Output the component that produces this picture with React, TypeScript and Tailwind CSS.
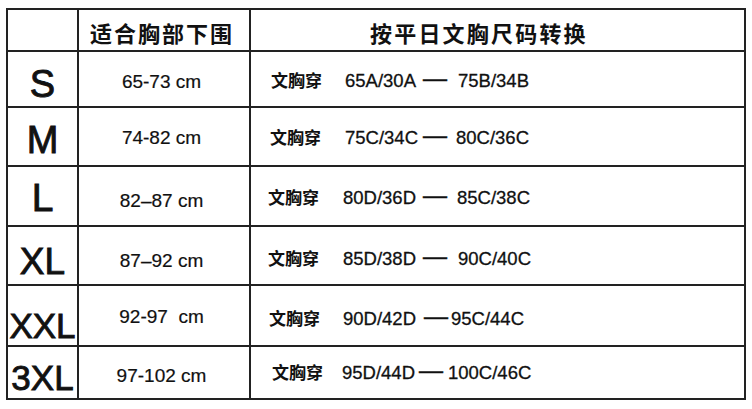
import React from "react";

type Row = {
  size: string;
  sizeCls: string;
  range: string;
  rangeCls: string;
  h: string;
  c3: string;
  w1: string;
  w2: string;
  w3: string;
  dash: string;
  a: string;
  b: string;
};

const rows: Row[] = [
  {
    size: "S",
    sizeCls: "text-[38px] pt-[9px]",
    range: "65-73 cm",
    rangeCls: "pt-[5px]",
    h: "h-[54px]",
    c3: "pl-[20px] pt-[5px]",
    w1: "w-[74px]",
    w2: "w-[78px]",
    w3: "w-[35px]",
    dash: "w-[24px]",
    a: "65A/30A",
    b: "75B/34B",
  },
  {
    size: "M",
    sizeCls: "text-[38px] pt-[7px]",
    range: "74-82 cm",
    rangeCls: "pt-[2px]",
    h: "h-[57px]",
    c3: "pl-[19px] pt-[3px]",
    w1: "w-[75px]",
    w2: "w-[78px]",
    w3: "w-[33px]",
    dash: "w-[24px]",
    a: "75C/34C",
    b: "80C/36C",
  },
  {
    size: "L",
    sizeCls: "text-[39px] pt-[3px]",
    range: "82\u201387 cm",
    rangeCls: "pt-[8px]",
    h: "h-[58px]",
    c3: "pl-[17px] pt-[4px]",
    w1: "w-[75px]",
    w2: "w-[80px]",
    w3: "w-[34px]",
    dash: "w-[24px]",
    a: "80D/36D",
    b: "85C/38C",
  },
  {
    size: "XL",
    sizeCls: "text-[37px] pt-[11px]",
    range: "87\u201392 cm",
    rangeCls: "pt-[9px]",
    h: "h-[57px]",
    c3: "pl-[17px] pt-[7px]",
    w1: "w-[75px]",
    w2: "w-[80px]",
    w3: "w-[35px]",
    dash: "w-[24px]",
    a: "85D/38D",
    b: "90C/40C",
  },
  {
    size: "XXL",
    sizeCls: "text-[35px] pt-[19px]",
    range: "92-97\u00a0 cm",
    rangeCls: "pt-[2px]",
    h: "h-[59px]",
    c3: "pl-[18px] pt-[7px]",
    w1: "w-[74px]",
    w2: "w-[81px]",
    w3: "w-[27px]",
    dash: "w-[24px]",
    a: "90D/42D",
    b: "95C/44C",
  },
  {
    size: "3XL",
    sizeCls: "text-[35px] pt-[10px]",
    range: "97-102 cm",
    rangeCls: "pt-[5px]",
    h: "h-[51px]",
    c3: "pl-[21px] pt-[1px]",
    w1: "w-[70px]",
    w2: "w-[77px]",
    w3: "w-[29px]",
    dash: "w-[26px]",
    a: "95D/44D",
    b: "100C/46C",
  },
];

export default function App() {
  return (
    <div className="w-[752px] h-[409px] bg-white pl-[6px] pt-[8px] text-[#111] font-['Liberation_Sans','Noto_Sans_CJK_SC',sans-serif]">
      <div className="w-[740px] bg-[#222] p-[2px] flex flex-col gap-[2px]">
        {/* header */}
        <div className="grid grid-cols-[69px_170px_493px] gap-[2px] h-[40px]">
          <div className="bg-white" />
          <div className="bg-white flex items-center pl-[11px] pt-[3px]">
            <span className="font-['Noto_Sans_CJK_SC',sans-serif] font-bold text-[22px] tracking-[2px] leading-none">
              适合胸部下围
            </span>
          </div>
          <div className="bg-white flex items-center pl-[119px] pt-[3px]">
            <span className="font-['Noto_Sans_CJK_SC',sans-serif] font-bold text-[22px] tracking-[2.2px] leading-none">
              按平日文胸尺码转换
            </span>
          </div>
        </div>
        {rows.map((r) => (
          <div
            key={r.size}
            className={`grid grid-cols-[69px_170px_493px] gap-[2px] ${r.h}`}
          >
            <div
              className={`bg-white flex items-center justify-center leading-none [-webkit-text-stroke:0.9px_#111] ${r.sizeCls}`}
            >
              {r.size}
            </div>
            <div
              className={`bg-white flex items-center justify-center pr-[5px] text-[19px] leading-none whitespace-pre [-webkit-text-stroke:0.2px_#111] ${r.rangeCls}`}
            >
              {r.range}
            </div>
            <div className={`bg-white flex items-center leading-none ${r.c3}`}>
              <span
                className={`${r.w1} shrink-0 mb-[4px] font-['Noto_Sans_CJK_SC',sans-serif] font-bold text-[17px]`}
              >
                文胸穿
              </span>
              <span
                className={`${r.w2} shrink-0 text-[18.5px] [-webkit-text-stroke:0.3px_#111]`}
              >
                {r.a}
              </span>
              <span className={`${r.w3} shrink-0 flex items-center mb-[7px]`}>
                <span
                  className={`${r.dash} inline-block text-[24px] leading-none [-webkit-text-stroke:0.5px_#111]`}
                >
                  —
                </span>
              </span>
              <span className="shrink-0 text-[18.5px] [-webkit-text-stroke:0.3px_#111]">
                {r.b}
              </span>
            </div>
          </div>
        ))}
      </div>
    </div>
  );
}
